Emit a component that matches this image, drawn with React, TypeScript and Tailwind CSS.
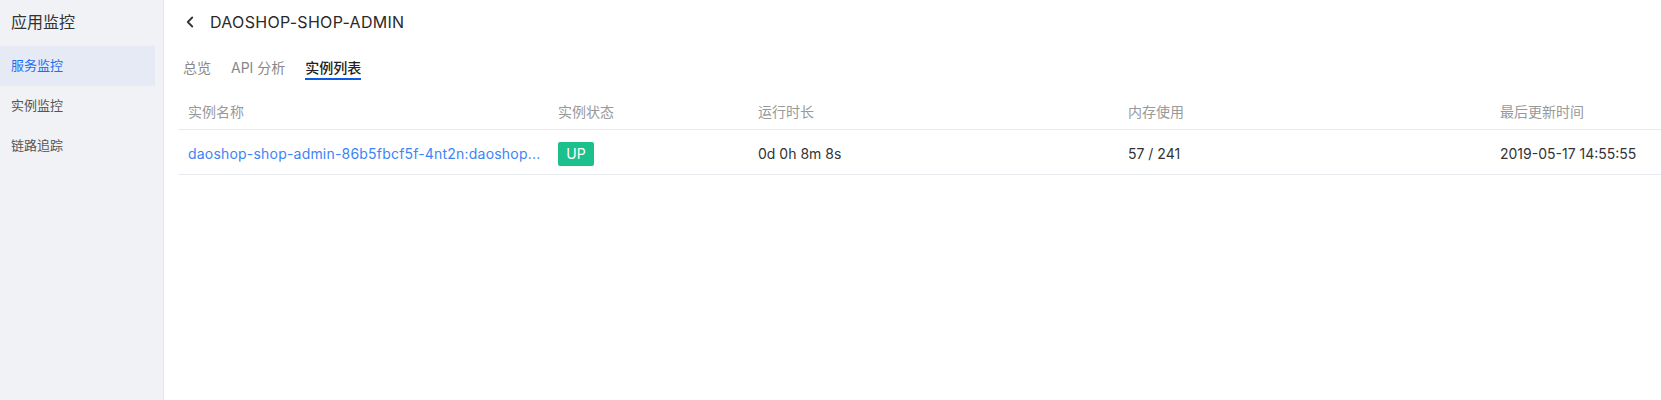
import { ChevronLeft } from "lucide-react";

const font = { fontFamily: "Inter, 'Noto Sans CJK SC', sans-serif" };

const navItems = [
  { label: "服务监控", active: true },
  { label: "实例监控", active: false },
  { label: "链路追踪", active: false },
];

const tabs = [
  { label: "总览", active: false },
  { label: "API 分析", active: false },
  { label: "实例列表", active: true },
];

const columns = [
  { title: "实例名称", width: "w-[370px]" },
  { title: "实例状态", width: "w-[200px]" },
  { title: "运行时长", width: "w-[370px]" },
  { title: "内存使用", width: "w-[372px]" },
  { title: "最后更新时间", width: "flex-1" },
];

export default function App() {
  return (
    <div className="flex h-[400px] w-full bg-white text-[#333]" style={font}>
      <aside className="w-[164px] shrink-0 bg-[#f0f2f6] border-r border-[#e4e7ec] pr-[8px]">
        <div className="h-[44px] flex items-center px-[11px] text-[16px] text-[#333]">
          应用监控
        </div>
        <nav className="mt-[2px] flex flex-col">
          {navItems.map((item) => (
            <div
              key={item.label}
              className={`h-[40px] flex items-center px-[11px] text-[13px] ${
                item.active ? "bg-[#e5eaf5] text-[#1d6ef2]" : "text-[#555]"
              }`}
            >
              {item.label}
            </div>
          ))}
        </nav>
      </aside>

      <main className="flex-1 pl-[14px]">
        <div className="h-[44px] flex items-center">
          <ChevronLeft size={18} strokeWidth={2.4} className="ml-[3px] text-[#333]" />
          <h1 className="ml-[11px] text-[16px] tracking-[0.3px] text-[#2a2a2a]">DAOSHOP-SHOP-ADMIN</h1>
        </div>

        <div className="mt-[14px] flex gap-[20px] pl-[5px]">
          {tabs.map((tab) => (
            <div key={tab.label} className="flex flex-col">
              <span
                className={`text-[14px] leading-[20px] ${
                  tab.active ? "text-[#222] font-medium" : "text-[#888]"
                }`}
              >
                {tab.label}
              </span>
              <div className={`h-[2px] ${tab.active ? "bg-[#0a5be0]" : "bg-transparent"}`}></div>
            </div>
          ))}
        </div>

        <div className="text-[14px]">
          <div className="flex h-[50px] items-end pb-[7px] border-b border-[#e8ebf0] text-[#999]">
            {columns.map((col) => (
              <div key={col.title} className={`${col.width} px-[10px] leading-[20px]`}>
                {col.title}
              </div>
            ))}
          </div>
          <div className="flex h-[45px] items-center pt-[3px] border-b border-[#e8ebf0] text-[#333]">
            <div className="w-[370px] px-[10px] whitespace-nowrap tracking-[0.2px] text-[#3d84f5]">
              daoshop-shop-admin-86b5fbcf5f-4nt2n:daoshop...
            </div>
            <div className="w-[200px] px-[10px]">
              <span className="inline-flex h-[24px] w-[36px] items-center justify-center rounded-[2px] bg-[#1cc08d] text-white">
                UP
              </span>
            </div>
            <div className="w-[370px] px-[10px]">0d 0h 8m 8s</div>
            <div className="w-[372px] px-[10px]">57 / 241</div>
            <div className="flex-1 px-[10px]">2019-05-17 14:55:55</div>
          </div>
        </div>
      </main>
    </div>
  );
}
